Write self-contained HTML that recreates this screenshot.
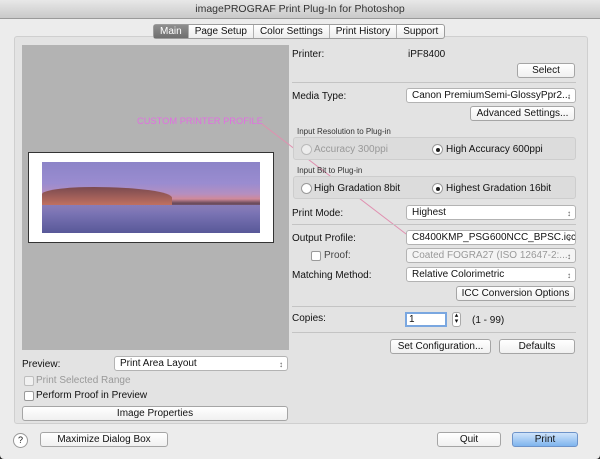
<!DOCTYPE html>
<html><head><style>
*{box-sizing:border-box;margin:0;padding:0}
body{width:600px;height:459px;overflow:hidden;background:#2a2a2a;font-family:"Liberation Sans",sans-serif;font-size:10px;color:#111;position:relative}
.win{position:absolute;left:0;top:0;width:600px;height:459px;background:#ececec;border-radius:4px}
.title{position:absolute;left:0;top:0;width:600px;height:19px;background:linear-gradient(#e8e8e8,#c9c9c9);border-bottom:1px solid #9a9a9a;text-align:center;font-size:10.5px;line-height:19px;color:#333}
.a{position:absolute;white-space:nowrap}
.panel{position:absolute;left:14px;top:36px;width:574px;height:388px;background:#e3e3e3;border:1px solid #cfcfcf;border-radius:3px}
.tabs{position:absolute;left:153px;top:24px;height:15px;display:flex;border:1px solid #9c9c9c;border-radius:3px;background:linear-gradient(#fff,#ececec);font-size:10px;line-height:13px}
.tabs div{padding:0 6px;border-left:1px solid #b0b0b0}
.tabs div:first-child{border:none;background:linear-gradient(#8e8e8e,#6e6e6e);color:#fff}
.btn{position:absolute;height:15px;border:1px solid #a5a5a5;border-radius:3px;background:linear-gradient(#fff,#f0f0f0);text-align:center;line-height:13px;font-size:10px}
.sel{position:absolute;height:15px;border:1px solid #b3b3b3;border-radius:3px;background:#fff;line-height:13px;padding-left:5px;padding-right:14px;font-size:10px;overflow:hidden;white-space:nowrap}
.sel:after{content:"\2195";position:absolute;right:4px;top:1px;font-size:8px;color:#555}
.hr{position:absolute;height:1px;background:#c4c4c4}
.grp{position:absolute;border:1px solid #cdcdcd;background:#dcdcdc;border-radius:3px}
.rad{position:absolute;width:11px;height:11px;border-radius:50%;border:1px solid #9a9a9a;background:#fff}
.rad.on:after{content:"";position:absolute;left:3px;top:3px;width:4px;height:4px;border-radius:50%;background:#222}
.cb{position:absolute;width:10px;height:10px;border:1px solid #9a9a9a;border-radius:2px;background:#fff}
.small{font-size:8px;color:#333}
</style></head><body>
<div class="win">
<div class="title">imagePROGRAF Print Plug-In for Photoshop</div>
<div class="panel"></div>
<div class="tabs"><div>Main</div><div>Page Setup</div><div>Color Settings</div><div>Print History</div><div>Support</div></div>

<div class="a" style="left:22px;top:45px;width:267px;height:305px;background:#b3b3b3"></div>
<div class="a" style="left:28px;top:152px;width:246px;height:91px;background:#fff;border:1px solid #333"></div>
<div class="a" style="left:42px;top:162px;width:218px;height:71px;background:linear-gradient(180deg,#8c84c8 0%,#9a8cd0 30%,#b58fc0 45%,#d08a9a 52%,#6a4a5a 58%,#8a6a8a 65%,#6f6bb0 72%,#5a5a9a 100%)"></div>
<div class="a" style="left:42px;top:205px;width:218px;height:28px;background:linear-gradient(180deg,#8a80c0,#585898);opacity:.9"></div>
<div class="a" style="left:42px;top:187px;width:130px;height:18px;background:linear-gradient(180deg,#7a4a50,#c07060);border-radius:40% 60% 0 0"></div>
<div class="a" style="left:137px;top:116px;color:#e070e0;font-size:9.3px">CUSTOM PRINTER PROFILE</div>
<svg class="a" style="left:0;top:0" width="600" height="459"><line x1="262" y1="124" x2="410" y2="237" stroke="#e090b0" stroke-width="1"/></svg>

<div class="a" style="left:292px;top:49px">Printer:</div>
<div class="a" style="left:408px;top:49px">iPF8400</div>
<div class="btn" style="left:517px;top:63px;width:58px">Select</div>
<div class="hr" style="left:292px;top:82px;width:284px"></div>
<div class="a" style="left:292px;top:91px">Media Type:</div>
<div class="sel" style="left:406px;top:88px;width:170px">Canon PremiumSemi-GlossyPpr2...</div>
<div class="btn" style="left:470px;top:106px;width:105px">Advanced Settings...</div>
<div class="a small" style="left:297px;top:127px">Input Resolution to Plug-in</div>
<div class="grp" style="left:293px;top:137px;width:283px;height:23px"></div>
<div class="rad" style="left:301px;top:144px;opacity:.5"></div>
<div class="a" style="left:314px;top:144px;color:#999">Accuracy 300ppi</div>
<div class="rad on" style="left:432px;top:144px"></div>
<div class="a" style="left:446px;top:144px">High Accuracy 600ppi</div>
<div class="a small" style="left:297px;top:166px">Input Bit to Plug-in</div>
<div class="grp" style="left:293px;top:176px;width:283px;height:23px"></div>
<div class="rad" style="left:301px;top:183px"></div>
<div class="a" style="left:314px;top:183px">High Gradation 8bit</div>
<div class="rad on" style="left:432px;top:183px"></div>
<div class="a" style="left:446px;top:183px">Highest Gradation 16bit</div>
<div class="a" style="left:292px;top:208px">Print Mode:</div>
<div class="sel" style="left:406px;top:205px;width:170px">Highest</div>
<div class="hr" style="left:292px;top:224px;width:284px"></div>
<div class="a" style="left:292px;top:233px">Output Profile:</div>
<div class="sel" style="left:406px;top:230px;width:170px">C8400KMP_PSG600NCC_BPSC.icc...</div>
<div class="cb" style="left:311px;top:251px"></div>
<div class="a" style="left:324px;top:250px;color:#444">Proof:</div>
<div class="sel" style="left:406px;top:248px;width:170px;color:#999;background:#f4f4f4">Coated FOGRA27 (ISO 12647-2:...</div>
<div class="a" style="left:292px;top:270px">Matching Method:</div>
<div class="sel" style="left:406px;top:267px;width:170px">Relative Colorimetric</div>
<div class="btn" style="left:456px;top:286px;width:119px">ICC Conversion Options</div>
<div class="hr" style="left:292px;top:306px;width:284px"></div>
<div class="a" style="left:292px;top:313px">Copies:</div>
<div class="a" style="left:405px;top:312px;width:42px;height:15px;border:2px solid #7aa7e0;background:#fff;padding-left:2px;line-height:11px">1</div>
<div class="a" style="left:452px;top:312px;width:9px;height:15px;border:1px solid #aaa;border-radius:3px;background:#fff;font-size:7px;text-align:center;line-height:6px">&#9652;<br>&#9662;</div>
<div class="a" style="left:472px;top:315px">(1 - 99)</div>
<div class="hr" style="left:292px;top:332px;width:284px"></div>
<div class="btn" style="left:390px;top:339px;width:101px">Set Configuration...</div>
<div class="btn" style="left:499px;top:339px;width:76px">Defaults</div>

<div class="a" style="left:22px;top:359px">Preview:</div>
<div class="sel" style="left:114px;top:356px;width:174px">Print Area Layout</div>
<div class="cb" style="left:24px;top:376px;opacity:.5"></div>
<div class="a" style="left:36px;top:375px;color:#999">Print Selected Range</div>
<div class="cb" style="left:24px;top:391px"></div>
<div class="a" style="left:36px;top:390px">Perform Proof in Preview</div>
<div class="btn" style="left:22px;top:406px;width:266px">Image Properties</div>

<div class="a" style="left:13px;top:433px;width:15px;height:15px;border:1px solid #999;border-radius:50%;background:#fff;text-align:center;line-height:13px;font-size:9px">?</div>
<div class="btn" style="left:40px;top:432px;width:128px">Maximize Dialog Box</div>
<div class="btn" style="left:437px;top:432px;width:64px">Quit</div>
<div class="btn" style="left:512px;top:432px;width:66px;background:linear-gradient(#cfe4fb,#7fb4ee);border-color:#6d93c9">Print</div>
</div>
</body></html>
